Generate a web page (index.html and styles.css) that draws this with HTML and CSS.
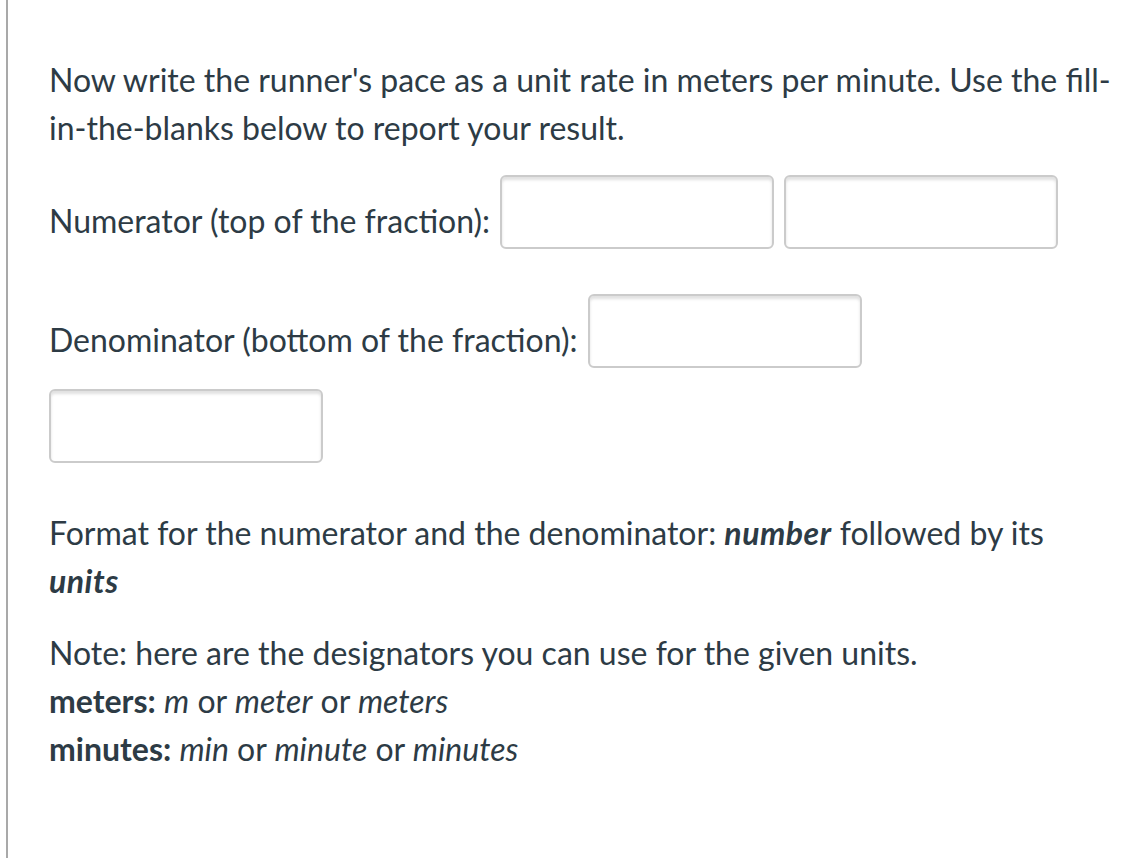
FILE: index.html
```html
<!DOCTYPE html>
<html lang="en">
<head>
    <meta charset="UTF-8">
    <meta name="viewport" content="width=device-width, initial-scale=1.0">
    <title>Unit rate question</title>
    <link rel="stylesheet" href="styles.css">
</head>
<body>

<div class="question">
    <p class="intro">Now write the runner's pace as a unit rate in meters per minute. Use the fill-in-the-blanks below to report your result.</p>

    <div class="answer-row first">
        <label for="num-value">Numerator (top of the fraction):</label>
        <input type="text" id="num-value" class="blank">
        <input type="text" id="num-unit" class="blank">
    </div>

    <div class="answer-row second">
        <label for="den-value">Denominator (bottom of the fraction):</label>
        <input type="text" id="den-value" class="blank">
    </div>

    <div class="answer-row third">
        <input type="text" id="den-unit" class="blank">
    </div>

    <p class="format">Format for the numerator and the denominator: <strong><em>number</em></strong> followed by its <strong><em>units</em></strong></p>

    <p class="note">Note: here are the designators you can use for the given units.<br>
        <strong>meters:</strong> <em>m</em> or <em>meter</em> or <em>meters</em><br>
        <strong>minutes:</strong> <em>min</em> or <em>minute</em> or <em>minutes</em></p>
</div>

</body>
</html>
```

FILE: styles.css
```css
body {
    margin: 0;
    padding: 0;
    background: #fff;
    font-family: 'Lato', 'Open Sans', sans-serif;
    color: #2d3b45;
}
.question {
    margin-left: 6px;
    min-height: 858px;
    box-sizing: border-box;
    border-left: 2px solid #a9a9a9;
    padding: 56px 12px 0 41px;
    font-size: 32px;
    line-height: 48px;
}
p {
    margin: 0;
}
.answer-row {
    display: flex;
    align-items: flex-start;
    gap: 10px;
}
.answer-row label {
    margin-top: 22px;
}
.answer-row.first {
    margin-top: 23px;
}
.answer-row.second {
    margin-top: 45px;
}
.answer-row.third {
    margin-top: 21px;
}
.blank {
    width: 274px;
    height: 74px;
    box-sizing: border-box;
    margin: 0;
    border: 2px solid #cbcbcb;
    border-radius: 6px;
    box-shadow: inset 0 3px 3px rgba(0, 0, 0, 0.12);
    background: #fff;
    font-family: inherit;
    font-size: 28px;
    padding: 8px 12px;
}
.format {
    margin-top: 46px;
}
.format strong {
    letter-spacing: 0.5px;
}
.note {
    margin-top: 24px;
}
```
